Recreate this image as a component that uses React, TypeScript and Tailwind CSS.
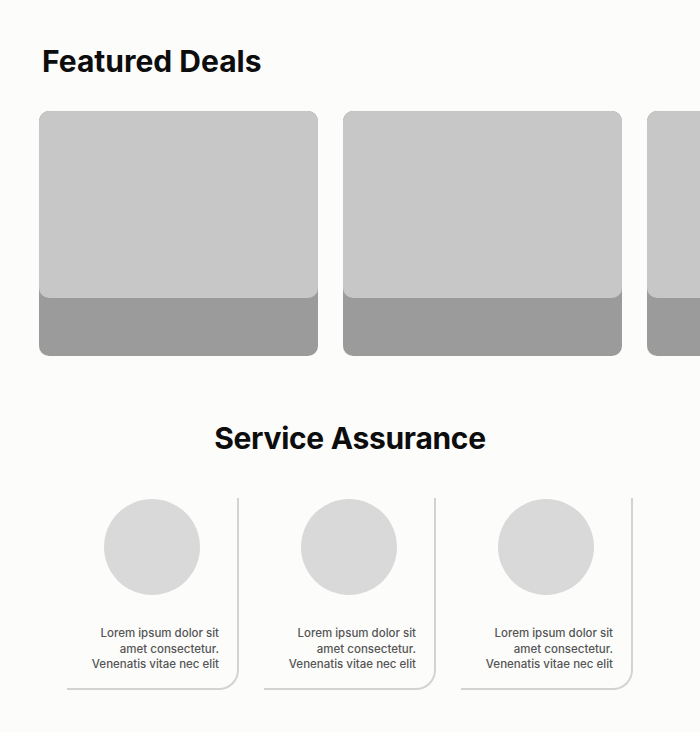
const deals = [1, 2, 3];
const services = [1, 2, 3];

export default function App() {
  return (
    <div className="min-h-screen w-full overflow-hidden bg-[#fcfcfb] font-['Inter',sans-serif]">
      {/* featured deals */}
      <section className="pt-[43px]">
        <h1 className="pl-[42px] text-[30px] font-bold leading-[36px] text-[#0d0d0d]">
          Featured Deals
        </h1>
        <div className="mt-[32px] flex gap-[25px] pl-[39px]">
          {deals.map((d) => (
            <div
              key={d}
              className="flex h-[245px] w-[279px] shrink-0 flex-col overflow-hidden rounded-[10px] bg-[#9b9b9b]"
            >
              <div className="h-[187px] rounded-[10px] bg-[#c7c7c7]" />
            </div>
          ))}
        </div>
      </section>

      {/* service assurance */}
      <section className="mt-[64px] flex flex-col items-center">
        <h2 className="text-[30px] font-bold leading-[36px] tracking-[-0.3px] text-[#0d0d0d]">
          Service Assurance
        </h2>
        <div className="mt-[42px] flex gap-[25px]">
          {services.map((s) => (
            <div
              key={s}
              className="flex h-[192px] w-[172px] flex-col items-center rounded-br-[20px] border-r-2 border-b-2 border-[#d3d3d3] pt-[1px]"
            >
              <div className="h-[96px] w-[96px] rounded-full bg-[#d9d9d9]" />
              <p className="mt-[31px] self-end pr-[18px] text-right text-[11.5px] font-medium leading-[15.5px] text-[#555555]">
                Lorem ipsum dolor sit
                <br />
                amet consectetur.
                <br />
                Venenatis vitae nec elit
              </p>
            </div>
          ))}
        </div>
      </section>
    </div>
  );
}
